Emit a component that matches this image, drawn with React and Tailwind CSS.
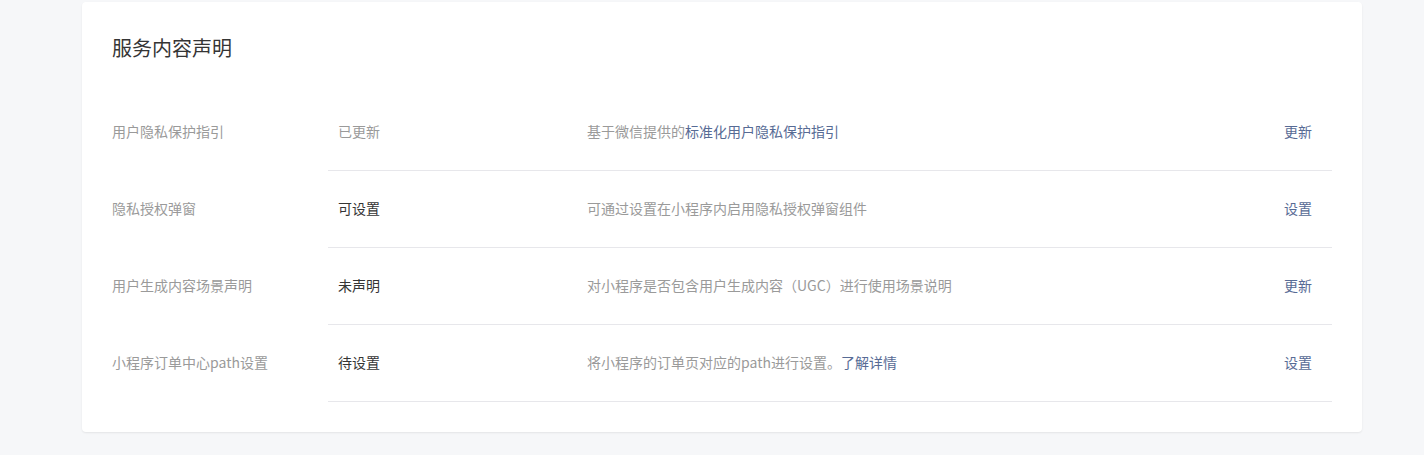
import React from 'react';

const rows = [
  {
    label: '用户隐私保护指引',
    status: '已更新',
    muted: true,
    desc: (
      <>
        基于微信提供的<a className="text-[#576b95]">标准化用户隐私保护指引</a>
      </>
    ),
    action: '更新',
  },
  { label: '隐私授权弹窗', status: '可设置', desc: '可通过设置在小程序内启用隐私授权弹窗组件', action: '设置' },
  { label: '用户生成内容场景声明', status: '未声明', desc: '对小程序是否包含用户生成内容（UGC）进行使用场景说明', action: '更新' },
  {
    label: '小程序订单中心path设置',
    status: '待设置',
    desc: (
      <>
        将小程序的订单页对应的path进行设置。<a className="text-[#576b95]">了解详情</a>
      </>
    ),
    action: '设置',
  },
];

const App = () => {
  return (
    <div
      className="min-h-[455px] bg-[#f6f7f9] pt-[2px]"
      style={{ fontFamily: '"Noto Sans CJK SC", "Noto Sans", sans-serif' }}
    >
      <div className="ml-[82px] w-[1280px] rounded-[4px] bg-white px-[30px] pt-[32px] pb-[30px] shadow-[0_1px_2px_rgba(0,0,0,0.08)]">
        <h2 className="mb-[32px] text-[20px] leading-[28px] text-[#353535]">服务内容声明</h2>
        <div>
          {rows.map((row) => (
            <div key={row.label} className="flex h-[77px] text-[14px]">
              <div className="flex w-[216px] items-center pb-[2px] text-[#9a9a9a]">{row.label}</div>
              <div className="flex flex-1 items-center border-b border-[#e7e7eb] pb-[1px]">
                <div className={`w-[259px] pl-[10px] ${row.muted ? 'text-[#9a9a9a]' : 'text-[#353535]'}`}>
                  {row.status}
                </div>
                <div className="flex-1 text-[#9a9a9a]">{row.desc}</div>
                <a className="pr-[20px] text-[#576b95]">{row.action}</a>
              </div>
            </div>
          ))}
        </div>
      </div>
    </div>
  );
};

export default App;
